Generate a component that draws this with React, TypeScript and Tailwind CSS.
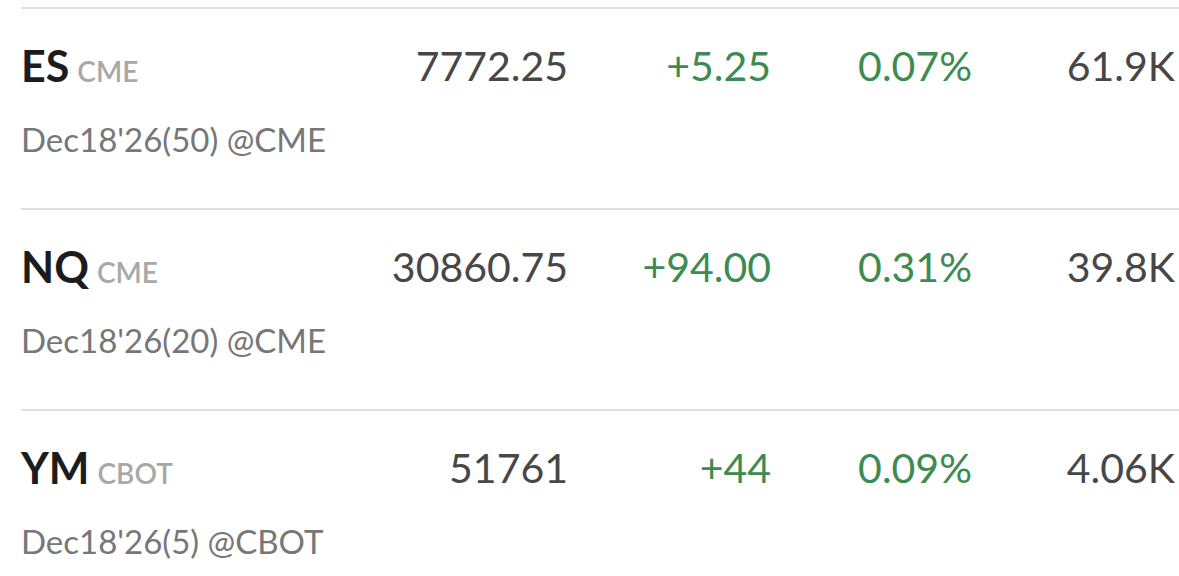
const rows = [
  { sym: "ES", ex: "CME", contract: "Dec18'26(50) @CME", price: "7772.25", chg: "+5.25", pct: "0.07%", vol: "61.9K" },
  { sym: "NQ", ex: "CME", contract: "Dec18'26(20) @CME", price: "30860.75", chg: "+94.00", pct: "0.31%", vol: "39.8K" },
  { sym: "YM", ex: "CBOT", contract: "Dec18'26(5) @CBOT", price: "51761", chg: "+44", pct: "0.09%", vol: "4.06K" },
];

function QuoteRow({ r }: { r: (typeof rows)[number] }) {
  return (
    <div className="flex h-[201px] border-t-2 border-[#e0e0e0] pt-[31px] pr-[4px]">
      <div className="flex-1">
        <div className="flex items-baseline leading-[52px]">
          <span className="text-[43px] font-bold text-[#1c1c1e]">{r.sym}</span>
          <span className="ml-[8px] text-[28px] font-semibold text-[#a8a8a8]">{r.ex}</span>
        </div>
        <div className="mt-[22px] text-[33px] leading-[40px] text-[#777777]">{r.contract}</div>
      </div>
      <div className="w-[203px] text-right text-[41px] leading-[52px] text-[#474747]">{r.price}</div>
      <div className="w-[203px] text-right text-[41px] leading-[52px] text-[#3d8b50]">{r.chg}</div>
      <div className="w-[201px] text-right text-[41px] leading-[52px] text-[#3d8b50]">{r.pct}</div>
      <div className="w-[203px] text-right text-[41px] leading-[52px] text-[#474747]">{r.vol}</div>
    </div>
  );
}

export default function App() {
  return (
    <div className="h-[576px] w-[1179px] overflow-hidden bg-white pl-[21px] pt-[7px] font-['Lato',sans-serif]">
      {rows.map((r) => (
        <QuoteRow key={r.sym} r={r} />
      ))}
    </div>
  );
}
